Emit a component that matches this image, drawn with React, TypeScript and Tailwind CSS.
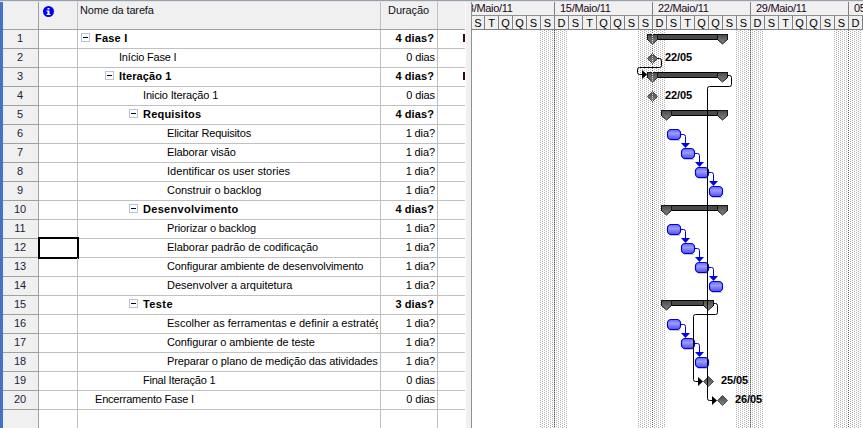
type Task = { id: number; name: string; level: number; duration: string; summary?: boolean; tracking?: string };

const tasks: Task[] = [
  { id: 1, name: "Fase I", level: 0, duration: "4 dias?", summary: true },
  { id: 2, name: "Início Fase I", level: 1, duration: "0 dias", tracking: "tracking-[-0.2px]" },
  { id: 3, name: "Iteração 1", level: 1, duration: "4 dias?", summary: true, tracking: "tracking-[0.1px]" },
  { id: 4, name: "Inicio Iteração 1", level: 2, duration: "0 dias", tracking: "tracking-[-0.15px]" },
  { id: 5, name: "Requisitos", level: 2, duration: "4 dias?", summary: true },
  { id: 6, name: "Elicitar Requisitos", level: 3, duration: "1 dia?", tracking: "tracking-[-0.18px]" },
  { id: 7, name: "Elaborar visão", level: 3, duration: "1 dia?" },
  { id: 8, name: "Identificar os user stories", level: 3, duration: "1 dia?", tracking: "tracking-[0.03px]" },
  { id: 9, name: "Construir o backlog", level: 3, duration: "1 dia?", tracking: "tracking-[-0.02px]" },
  { id: 10, name: "Desenvolvimento", level: 2, duration: "4 dias?", summary: true, tracking: "tracking-[0.3px]" },
  { id: 11, name: "Priorizar o backlog", level: 3, duration: "1 dia?" },
  { id: 12, name: "Elaborar padrão de codificação", level: 3, duration: "1 dia?", tracking: "tracking-[-0.04px]" },
  { id: 13, name: "Configurar ambiente de desenvolvimento", level: 3, duration: "1 dia?" },
  { id: 14, name: "Desenvolver a arquitetura", level: 3, duration: "1 dia?", tracking: "tracking-[-0.02px]" },
  { id: 15, name: "Teste", level: 2, duration: "3 dias?", summary: true, tracking: "tracking-[0.4px]" },
  { id: 16, name: "Escolher as ferramentas e definir a estratégia", level: 3, duration: "1 dia?", tracking: "tracking-[0.02px]" },
  { id: 17, name: "Configurar o ambiente de teste", level: 3, duration: "1 dia?" },
  { id: 18, name: "Preparar o plano de medição das atividades", level: 3, duration: "1 dia?" },
  { id: 19, name: "Final Iteração 1", level: 2, duration: "0 dias", tracking: "tracking-[-0.22px]" },
  { id: 20, name: "Encerramento Fase I", level: 0, duration: "0 dias", tracking: "tracking-[-0.2px]" },
];

const indents = ["pl-[17px]", "pl-[41px]", "pl-[65px]", "pl-[89px]"];

const weeks = [
  { label: "08/Maio/11", width: "w-[83px]", clipped: true },
  { label: "15/Maio/11", width: "w-[98px]" },
  { label: "22/Maio/11", width: "w-[98px]" },
  { label: "29/Maio/11", width: "w-[98px]" },
  { label: "05/Junho/11", width: "w-[98px]" },
];

const days = "STQQSSDSTQQSSDSTQQSSDSTQQSSD".split("");

function Info() {
  return (
    <svg width="11" height="11" viewBox="0 0 11 11">
      <circle cx="5.5" cy="5.5" r="5.5" fill="#0000f0" />
      <path d="M4.5 2h2v1.6h-2zM3.5 4.5h3V8h1v1h-4V8h1V5.5h-1z" fill="#fff" />
    </svg>
  );
}

function Row({ t }: { t: Task }) {
  const weight = t.summary ? "font-bold" : "";
  const tracking = t.tracking ?? (t.summary ? "tracking-[0.2px]" : "tracking-[-0.11px]");
  return (
    <div className="flex h-[19px] shrink-0 leading-[17px]">
      <div className="w-[36px] shrink-0 border-r border-b border-r-[#a0a0a0] border-b-[#a0a0a0] bg-[#f0f0f0] pr-[1px] text-center text-[#1c1c3c]">
        {t.id}
      </div>
      <div className="relative w-[39px] shrink-0 border-r border-b border-[#c0c0c0]">
        {t.id === 12 && <div className="absolute -top-[2px] -left-[1px] h-[22px] w-[41px] border-2 border-black" />}
      </div>
      <div className="w-[303px] shrink-0 border-r border-b border-[#c0c0c0] pr-[2px]">
        <div className={`flex overflow-hidden whitespace-nowrap ${indents[t.level]} ${weight} ${tracking}`}>
          {t.summary && (
            <span className="mt-[3px] mr-[5px] -ml-[14px] flex h-[9px] w-[9px] shrink-0 items-center justify-center border border-[#b8c4d4]">
              <span className="h-px w-[5px] bg-black" />
            </span>
          )}
          <span>{t.name}</span>
        </div>
      </div>
      <div className={`w-[57px] shrink-0 border-r border-b border-[#c0c0c0] text-right whitespace-nowrap ${weight} ${t.summary ? "pr-[3px] tracking-[0.1px]" : "pr-[2px] tracking-[-0.1px]"}`}>
        {t.duration}
      </div>
      <div className="flex w-[27px] shrink-0 justify-end border-b border-[#c0c0c0]">
        {(t.id === 1 || t.id === 3) && <div className="mt-[4px] h-2 w-[2px] bg-[#300808]" />}
      </div>
    </div>
  );
}

function Summary({ x1, x2, row }: { x1: number; x2: number; row: number }) {
  const y = 34 + (row - 1) * 19;
  const cap = (x: number) => `M${x + 0.5} ${y + 0.5}h10v5l-5 4.5l-5-4.5z`;
  return (
    <g>
      <rect x={x1 + 0.5} y={y + 0.5} width={x2 - x1 - 1} height={5} fill="#4a4a4a" stroke="#000" />
      <path d={cap(x1)} fill="url(#capFill)" stroke="#151515" />
      <path d={cap(x2 - 11)} fill="url(#capFill)" stroke="#151515" />
    </g>
  );
}

function Milestone({ x, row }: { x: number; row: number }) {
  const y = 58.5 + (row - 2) * 19;
  return <path d={`M${x} ${y - 5}l5 5l-5 5l-5-5z`} fill="url(#capFill)" stroke="#303030" strokeWidth="0.8" />;
}

function Bar({ x, row, link }: { x: number; row: number; link: boolean }) {
  const y = 129 + (row - 6) * 19;
  return (
    <g>
      <path d={`M${x + 3} ${y + 11.5}h10`} stroke="#c8c8c8" />
      <rect x={x + 0.5} y={y + 0.5} width={13} height={10} rx={3.6} fill="url(#barFill)" stroke="#0000d0" strokeWidth="1.2" />
      {link && (
        <g>
          <path d={`M${x + 14} ${y + 5.5}h2.5q2 0 2 2v7`} fill="none" stroke="#0000e8" />
          <path d={`M${x + 14} ${y + 14}h9l-4.5 5z`} fill="#0000e8" />
        </g>
      )}
    </g>
  );
}

const arrow = (x: number, y: number) => `M${x} ${y - 4.5}l5 4.5l-5 4.5z`;

function Chart() {
  return (
    <svg className="block" width="391" height="398" viewBox="472 30 391 398">
      <defs>
        <pattern id="dots" width="4" height="2" patternUnits="userSpaceOnUse" shapeRendering="crispEdges">
          <rect width="1" height="1" fill="#b0b0b0" />
          <rect x="2" y="1" width="1" height="1" fill="#b0b0b0" />
        </pattern>
        <linearGradient id="capFill" x1="0" x2="0" y1="0" y2="1">
          <stop offset="0" stopColor="#4a4a4a" />
          <stop offset="1" stopColor="#858585" />
        </linearGradient>
        <linearGradient id="barFill" x1="0" x2="0" y1="0" y2="1">
          <stop offset="0" stopColor="#6868f8" />
          <stop offset="0.4" stopColor="#9a9aff" />
          <stop offset="1" stopColor="#5050ee" />
        </linearGradient>
      </defs>
      {[540, 638, 736, 834].map((x) => (
        <rect key={x} x={x} y="30" width="28" height="398" fill="url(#dots)" />
      ))}
      {[554.5, 652.5, 750.5, 848.5].map((x) => (
        <path key={x} d={`M${x} 30V428`} stroke="#606060" strokeDasharray="1 1" />
      ))}
      <Summary x1={647} x2={728} row={1} />
      <Summary x1={647} x2={728} row={3} />
      <Summary x1={661} x2={728} row={5} />
      <Summary x1={661} x2={728} row={10} />
      <Summary x1={661} x2={714} row={15} />
      {[6, 11, 16].map((start) =>
        [0, 1, 2, 3].slice(0, start === 16 ? 3 : 4).map((i) => (
          <Bar key={start + i} x={667 + i * 14} row={start + i} link={i < (start === 16 ? 2 : 3)} />
        )),
      )}
      <Milestone x={652.5} row={2} />
      <Milestone x={652.5} row={4} />
      <Milestone x={708.5} row={19} />
      <Milestone x={722.5} row={20} />
      <g fill="none" stroke="#000">
        <path d="M657 58.5h2.5q2 0 2 2v5q0 2-2 2h-20q-2 0-2 2v3q0 2 2 2h4" />
        <path d="M728 75.5h1.5q2 0 2 2v7q0 2-2 2h-20q-2 0-2 2v310q0 2 2 2h3" />
        <path d="M714 303.5h1.5q2 0 2 2v7q0 2-2 2h-20q-2 0-2 2v63q0 2 2 2h3" />
      </g>
      <path d="M652.5 34V44M652.5 54V63M652.5 72V82M652.5 92V101" stroke="#d8d8d8" strokeDasharray="1 1" />
      <path d={`${arrow(642, 74.5)}${arrow(712, 400.5)}${arrow(698, 381.5)}`} fill="#000" />
      <g className="text-[11px] font-bold tracking-[-0.1px]" fill="#000">
        <text x="665" y="60.5">22/05</text>
        <text x="665" y="98.5">22/05</text>
        <text x="721" y="383.5">25/05</text>
        <text x="735" y="402.5">26/05</text>
      </g>
    </svg>
  );
}

export default function App() {
  return (
    <div className="flex h-[428px] w-[863px] flex-col overflow-hidden bg-white font-['Liberation_Sans',Arial,sans-serif] text-[11px] text-black">
      <div className="h-[2px] shrink-0 border-t border-[#a0a0a0] bg-[#d8e4f2]" />
      <div className="flex min-h-0 flex-1">
        <div className="w-[3px] shrink-0 bg-[#4472c4]" />
        <div className="flex w-[462px] shrink-0 flex-col">
          <div className="flex h-[28px] shrink-0 border-b border-[#a0a0a0] bg-[#f0f0f0] text-[#101020]">
            <div className="w-[36px] border-r border-[#a0a0a0]" />
            <div className="w-[39px] border-r border-[#c0c0c0] pt-[4px] pl-[4px]"><Info /></div>
            <div className="w-[303px] border-r border-[#c0c0c0] pt-[1px] pl-[2px] leading-[14px] tracking-[-0.15px]">Nome da tarefa</div>
            <div className="w-[57px] border-r border-[#c0c0c0] pt-[1px] pr-[1px] text-center leading-[14px] tracking-[-0.1px]">Duração</div>
          </div>
          {tasks.map((t) => <Row key={t.id} t={t} />)}
          <div className="flex flex-1">
            <div className="w-[36px] border-r border-[#a0a0a0] bg-[#f0f0f0]" />
            <div className="w-[39px] border-r border-[#c0c0c0]" />
            <div className="w-[303px] border-r border-[#c0c0c0]" />
            <div className="w-[57px] border-r border-[#c0c0c0]" />
          </div>
        </div>
        <div className="w-[7px] shrink-0 border-r border-l border-r-[#909090] border-l-white bg-[#f0f0f0]" />
        <div className="flex min-w-0 flex-1 flex-col overflow-hidden">
          <div className="flex h-[14px] shrink-0 border-b border-[#909090] bg-[#f0f0f0] leading-[13px] tracking-[-0.3px] text-[#200818]">
            {weeks.map((w) => (
              <div key={w.label} className={`${w.width} flex shrink-0 overflow-hidden border-r border-[#808080] whitespace-nowrap ${w.clipped ? "pl-0" : "pl-[5px]"}`}>
                <span className={w.clipped ? "-ml-[10px]" : ""}>{w.label}</span>
              </div>
            ))}
          </div>
          <div className="flex h-[14px] shrink-0 border-b border-[#808080] bg-[#f0f0f0] leading-[14px]">
            {days.map((d, i) => (
              <div key={i} className={`shrink-0 border-r border-[#808080] text-center ${i === 0 ? "w-[13px]" : "w-[14px]"}`}>{d}</div>
            ))}
          </div>
          <Chart />
        </div>
      </div>
    </div>
  );
}
